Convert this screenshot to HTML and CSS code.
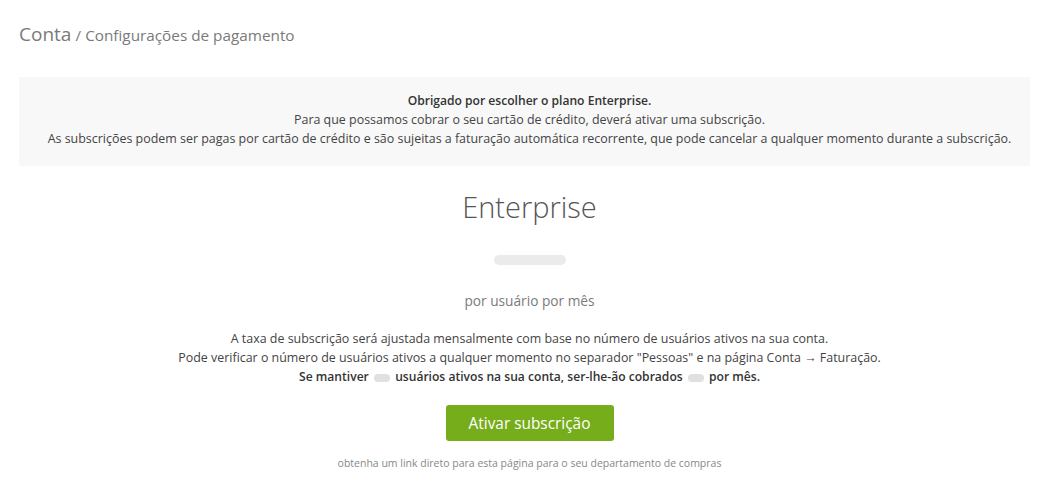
FILE: index.html
```html
<!DOCTYPE html>
<html lang="pt">
<head>
<meta charset="utf-8">
<link rel="stylesheet" href="styles.css">
</head>
<body>
<div class="page">
  <div class="breadcrumb"><span class="crumb-main">Conta</span> <span class="crumb-sub">/ Configurações de pagamento</span></div>
  <div class="notice">
    <div class="notice-title">Obrigado por escolher o plano Enterprise.</div>
    <div>Para que possamos cobrar o seu cartão de crédito, deverá ativar uma subscrição.</div>
    <div>As subscrições podem ser pagas por cartão de crédito e são sujeitas a faturação automática recorrente, que pode cancelar a qualquer momento durante a subscrição.</div>
  </div>
  <div class="plan">
    <h1 class="plan-name">Enterprise</h1>
    <div class="price-placeholder"></div>
    <div class="per-user">por usuário por mês</div>
    <div class="details">
      <div>A taxa de subscrição será ajustada mensalmente com base no número de usuários ativos na sua conta.</div>
      <div>Pode verificar o número de usuários ativos a qualquer momento no separador "Pessoas" e na página Conta → Faturação.</div>
      <div class="details-strong">Se mantiver <span class="pill"></span> usuários ativos na sua conta, ser-lhe-ão cobrados <span class="pill"></span> por mês.</div>
    </div>
    <button class="activate">Ativar subscrição</button>
    <div class="direct-link">obtenha um link direto para esta página para o seu departamento de compras</div>
  </div>
</div>
</body>
</html>
```
FILE: styles.css
```css
html, body {
  margin: 0;
  padding: 0;
  background: #fff;
}
body {
  font-family: "Open Sans", "Liberation Sans", sans-serif;
  color: #444;
}
.page {
  padding: 20px 34px 0 19px;
}
.breadcrumb {
  color: #7a7a7a;
  height: 28px;
  line-height: 28px;
}
.crumb-main {
  font-size: 19px;
}
.crumb-sub {
  font-size: 15.3px;
}
.notice {
  margin-top: 29px;
  background: #f8f8f8;
  padding: 14px 0 18px 10px;
  text-align: center;
  font-size: 12.45px;
  line-height: 19px;
  color: #444;
}
.notice-title {
  font-weight: 600;
  font-size: 12.1px;
  color: #333;
}
.plan {
  display: flex;
  flex-direction: column;
  align-items: center;
  text-align: center;
  padding-left: 10px;
}
.plan-name {
  margin: 20px 0 0;
  font-size: 29px;
  font-weight: 300;
  line-height: 42px;
  color: #555;
}
.price-placeholder {
  margin-top: 27px;
  width: 72px;
  height: 10px;
  border-radius: 5px;
  background: #ebebeb;
}
.per-user {
  margin-top: 26px;
  font-size: 13.7px;
  line-height: 20px;
  color: #7a7a7a;
}
.details {
  margin-top: 18px;
  font-size: 12.45px;
  line-height: 19px;
  color: #444;
}
.details-strong {
  font-weight: 600;
  font-size: 12.1px;
  color: #333;
}
.pill {
  display: inline-block;
  width: 16px;
  height: 8px;
  border-radius: 4px;
  background: #e0e0e0;
  margin: 0 2px;
  vertical-align: middle;
}
.activate {
  margin-top: 19px;
  width: 168px;
  height: 36px;
  border: none;
  border-radius: 3px;
  background: #76ad1a;
  color: #fff;
  font-family: "Open Sans", "Liberation Sans", sans-serif;
  font-size: 15.4px;
  cursor: pointer;
}
.direct-link {
  margin-top: 14px;
  font-size: 10.5px;
  line-height: 16px;
  color: #888;
}
```
